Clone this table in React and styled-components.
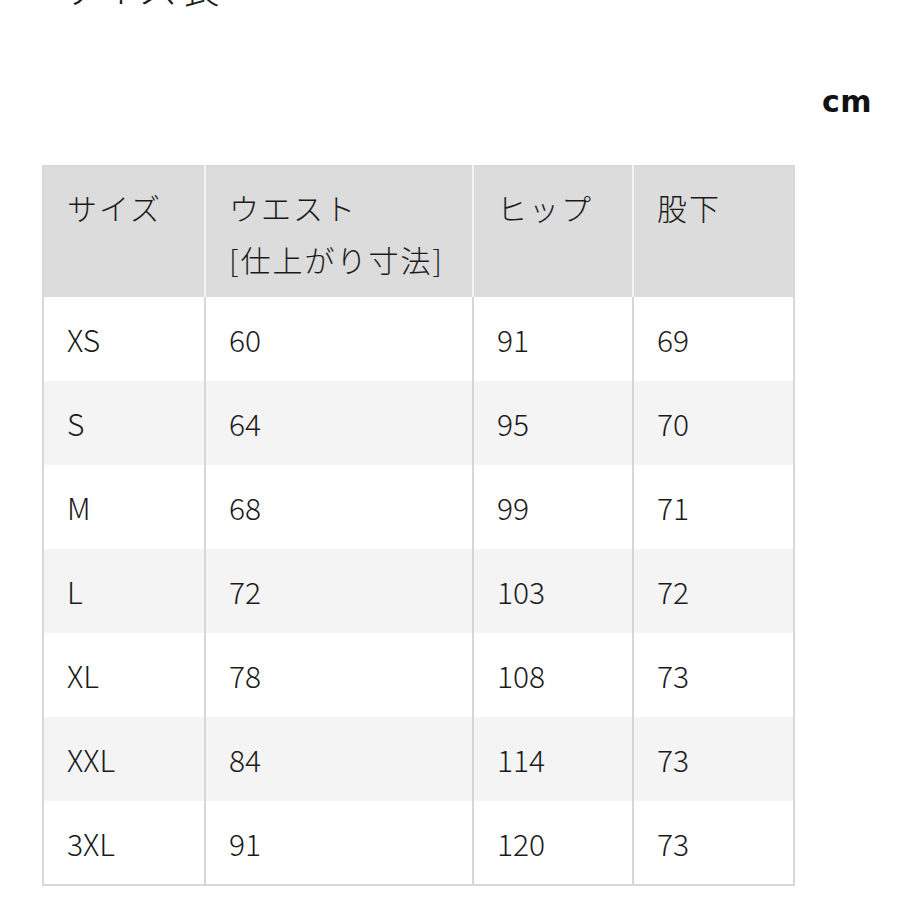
import React from 'react';
import styled, { createGlobalStyle } from 'styled-components';

const GlobalStyle = createGlobalStyle`
  html, body {
    margin: 0;
    padding: 0;
    background: #ffffff;
  }
  body {
    font-family: "Noto Sans CJK JP", "Noto Sans", sans-serif;
    color: #1b1b1b;
    overflow: hidden;
  }
`;

const SIZES = [
  { size: 'XS', waist: 60, hip: 91, inseam: 69 },
  { size: 'S', waist: 64, hip: 95, inseam: 70 },
  { size: 'M', waist: 68, hip: 99, inseam: 71 },
  { size: 'L', waist: 72, hip: 103, inseam: 72 },
  { size: 'XL', waist: 78, hip: 108, inseam: 73 },
  { size: 'XXL', waist: 84, hip: 114, inseam: 73 },
  { size: '3XL', waist: 91, hip: 120, inseam: 73 },
];

const Page = styled.div`
  width: 900px;
  height: 900px;
  overflow: hidden;
  display: flex;
  flex-direction: column;
`;

const Title = styled.h1`
  margin: -42px 0 0 58px;
  font-size: 40px;
  font-weight: 300;
  line-height: 56px;
  letter-spacing: 1px;
  color: #1b1b1b;
`;

const UnitRow = styled.div`
  display: flex;
  justify-content: flex-end;
  padding: 70px 28px 0 0;
`;

const Unit = styled.span`
  font-family: "DejaVu Sans", "Liberation Sans", sans-serif;
  font-weight: 700;
  font-size: 30px;
  line-height: 36px;
  letter-spacing: 0.5px;
  color: #111;
`;

const Table = styled.table`
  margin: 45px 0 0 42px;
  width: 751px;
  border-collapse: collapse;
  table-layout: fixed;
  border: 2px solid #d8d8d8;
`;

const HeadCell = styled.th`
  width: ${p => p.$w}px;
  height: 131px;
  box-sizing: border-box;
  padding: 14px 0 0 23px;
  vertical-align: top;
  text-align: left;
  background: #dcdcdc;
  border-right: 2px solid #f4f4f4;
  font-size: 30px;
  font-weight: 300;
  line-height: 52px;
  letter-spacing: 2px;
  color: #1b1b1b;

  &:last-child {
    border-right: none;
  }
`;

const Row = styled.tr`
  background: ${p => (p.$alt ? '#f4f4f4' : '#ffffff')};
`;

const Cell = styled.td`
  height: 84px;
  box-sizing: border-box;
  padding: 0 0 0 23px;
  vertical-align: middle;
  border-right: 2px solid #d6d6d6;
  font-size: 30px;
  font-weight: 300;
  line-height: 36px;
  color: #1b1b1b;

  &:last-child {
    border-right: none;
  }
`;

export default function App() {
  return (
    <Page>
      <GlobalStyle />
      <Title>サイズ表</Title>
      <UnitRow>
        <Unit>cm</Unit>
      </UnitRow>
      <Table>
        <thead>
          <tr>
            <HeadCell $w={162}>サイズ</HeadCell>
            <HeadCell $w={268}>
              ウエスト
              <br />
              [仕上がり寸法]
            </HeadCell>
            <HeadCell $w={160}>ヒップ</HeadCell>
            <HeadCell $w={161}>股下</HeadCell>
          </tr>
        </thead>
        <tbody>
          {SIZES.map((r, i) => (
            <Row key={r.size} $alt={i % 2 === 1}>
              <Cell>{r.size}</Cell>
              <Cell>{r.waist}</Cell>
              <Cell>{r.hip}</Cell>
              <Cell>{r.inseam}</Cell>
            </Row>
          ))}
        </tbody>
      </Table>
    </Page>
  );
}
